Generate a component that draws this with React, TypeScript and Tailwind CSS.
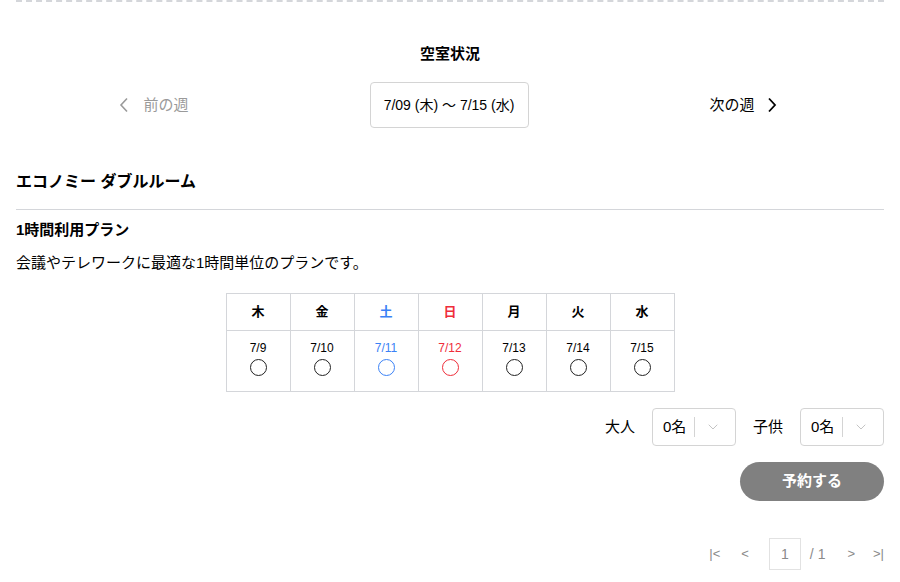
import { ChevronDown } from "lucide-react";

const days = [
  { w: "木", d: "7/9", c: "text-black", ring: "border-[#222]" },
  { w: "金", d: "7/10", c: "text-black", ring: "border-[#222]" },
  { w: "土", d: "7/11", c: "text-[#3b82f6]", ring: "border-[#3b82f6]" },
  { w: "日", d: "7/12", c: "text-[#ef2d3a]", ring: "border-[#ef2d3a]" },
  { w: "月", d: "7/13", c: "text-black", ring: "border-[#222]" },
  { w: "火", d: "7/14", c: "text-black", ring: "border-[#222]" },
  { w: "水", d: "7/15", c: "text-black", ring: "border-[#222]" },
];

function Counter({ label }: { label: string }) {
  return (
    <div className="flex items-center">
      <span className="mr-[17px] text-[15px] text-black">{label}</span>
      <div className="flex h-[38px] w-[84px] items-center rounded-[4px] border border-[#d4d4d4] bg-white">
        <span className="pl-[10px] text-[15px] text-black">0名</span>
        <span className="ml-[8px] h-[20px] w-px bg-[#d4d4d4]" />
        <ChevronDown className="ml-[10px] h-[16px] w-[16px] text-[#c4c4c4]" strokeWidth={1.5} />
      </div>
    </div>
  );
}

export default function App() {
  return (
    <div
      className="min-h-[582px] bg-white px-4 text-black"
      style={{ fontFamily: '"Liberation Sans", "Noto Sans CJK JP", sans-serif' }}
    >
      <div className="border-t-2 border-dashed border-[#d4d6da]" />

      <h2 className="mt-[41px] text-center text-[15px] font-bold leading-[22px]">空室状況</h2>

      <div className="mt-[17px] flex items-center justify-center gap-[181px] pr-[4px]">
        <button className="flex items-center text-[15px] text-[#9a9a9a]">
          <svg width="10" height="16" viewBox="0 0 10 16" className="mr-[14px]">
            <polyline points="8,1.5 2,8 8,14.5" fill="none" stroke="currentColor" strokeWidth="1.6" />
          </svg>
          前の週
        </button>
        <div className="flex h-[46px] w-[159px] items-center justify-center rounded-[4px] border border-[#d4d4d4] text-[14px]">
          7/09 (木) 〜 7/15 (水)
        </div>
        <button className="flex items-center text-[15px] text-black">
          次の週
          <svg width="10" height="16" viewBox="0 0 10 16" className="ml-[12px]">
            <polyline points="2,1.5 8,8 2,14.5" fill="none" stroke="currentColor" strokeWidth="1.8" />
          </svg>
        </button>
      </div>

      <h3 className="mt-[42px] text-[16px] font-bold leading-[24px]">エコノミー ダブルルーム</h3>
      <div className="mt-[15px] border-t border-[#d4d6da]" />

      <h4 className="mt-[9px] text-[15px] font-bold leading-[22px]">1時間利用プラン</h4>
      <p className="mt-[11px] text-[15px] leading-[22px]">会議やテレワークに最適な1時間単位のプランです。</p>

      <div className="mt-[19px] flex justify-center">
        <table className="border-collapse border border-[#d4d6da] text-center">
          <thead>
            <tr>
              {days.map((x) => (
                <th
                  key={x.w}
                  className={`h-[37px] w-[64px] border border-[#d4d6da] text-[13px] font-bold ${x.c}`}
                >
                  {x.w}
                </th>
              ))}
            </tr>
          </thead>
          <tbody>
            <tr>
              {days.map((x) => (
                <td key={x.d} className={`h-[61px] border border-[#d4d6da] align-top ${x.c}`}>
                  <div className="mt-[10px] text-[12px] leading-[14px]">{x.d}</div>
                  <div className={`mx-auto mt-[4px] h-[17px] w-[17px] rounded-full border ${x.ring}`} />
                </td>
              ))}
            </tr>
          </tbody>
        </table>
      </div>

      <div className="mt-[16px] flex justify-end gap-[17px]">
        <Counter label="大人" />
        <Counter label="子供" />
      </div>

      <div className="mt-[16px] flex justify-end">
        <button className="h-[39px] w-[144px] rounded-full bg-[#808080] text-[15px] font-bold text-white">
          予約する
        </button>
      </div>

      <div className="mt-[37px] flex items-center justify-end text-[13px] text-[#8a8a8a]">
        <span className="mr-[21px]">|&lt;</span>
        <span className="mr-[20px]">&lt;</span>
        <span className="flex h-[32px] w-[32px] items-center justify-center border border-[#e2e2e2] text-[14px]">1</span>
        <span className="ml-[9px] text-[14px]">/ 1</span>
        <span className="ml-[22px]">&gt;</span>
        <span className="ml-[18px]">&gt;|</span>
      </div>
    </div>
  );
}
